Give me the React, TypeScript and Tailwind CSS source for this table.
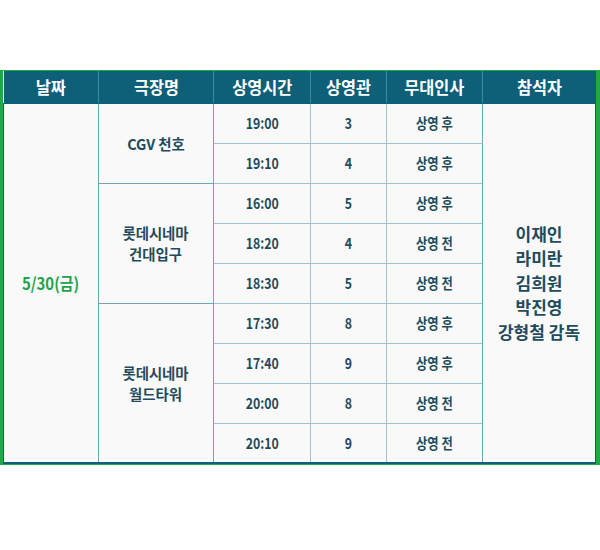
import React from 'react';

type Show = { time: string; hall: string; stage: string };
type Theater = { name: string[]; shows: Show[] };

const theaters: Theater[] = [
  {
    name: ['CGV 천호'],
    shows: [
      { time: '19:00', hall: '3', stage: '상영 후' },
      { time: '19:10', hall: '4', stage: '상영 후' },
    ],
  },
  {
    name: ['롯데시네마', '건대입구'],
    shows: [
      { time: '16:00', hall: '5', stage: '상영 후' },
      { time: '18:20', hall: '4', stage: '상영 전' },
      { time: '18:30', hall: '5', stage: '상영 전' },
    ],
  },
  {
    name: ['롯데시네마', '월드타워'],
    shows: [
      { time: '17:30', hall: '8', stage: '상영 후' },
      { time: '17:40', hall: '9', stage: '상영 후' },
      { time: '20:00', hall: '8', stage: '상영 전' },
      { time: '20:10', hall: '9', stage: '상영 전' },
    ],
  },
];

const attendees = ['이재인', '라미란', '김희원', '박진영', '강형철 감독'];
const headers = ['날짜', '극장명', '상영시간', '상영관', '무대인사', '참석자'];
const totalRows = theaters.reduce((n, t) => n + t.shows.length, 0);

const cell = 'border border-[#9ec4d1] text-center align-middle';

// the original uses a condensed face; squeeze the regular one
function Narrow({ children, className }: { children: React.ReactNode; className?: string }) {
  return <span className={`inline-block scale-x-[0.82] ${className ?? ''}`}>{children}</span>;
}

export default function App() {
  return (
    <div
      className="w-[600px] h-[550px] bg-white pt-[70px]"
      style={{ fontFamily: '"Noto Sans CJK KR", "Noto Sans", sans-serif' }}
    >
      <div className="bg-[#1fa947] pl-[3px] pr-[4px] pt-[1px] pb-[1px]">
        <table className="w-full table-fixed border-collapse border-b-2 border-[#0e5f78] bg-[#f9f9f9] text-[#1f4b5c]">
          <colgroup>
            <col className="w-[95px]" />
            <col className="w-[115px]" />
            <col className="w-[97px]" />
            <col className="w-[76px]" />
            <col className="w-[96px]" />
            <col />
          </colgroup>
          <thead>
            <tr className="h-[32px] bg-[#0e5f78]">
              {headers.map((h) => (
                <th
                  key={h}
                  className="border-x border-[#3d8aa5] first:border-l-0 last:border-r-0 border-b border-b-[#0e5f78] text-[17px] leading-[20px] font-bold text-white"
                >
                  <Narrow className="scale-x-[0.96]">{h}</Narrow>
                </th>
              ))}
            </tr>
          </thead>
          <tbody>
            {theaters.map((t, ti) =>
              t.shows.map((s, si) => (
                <tr key={`${ti}-${si}`} className="h-[40px]">
                  {ti === 0 && si === 0 && (
                    <td
                      rowSpan={totalRows}
                      className="border border-[#6fa6ba] border-l-[#0e5f78] text-center align-middle text-[17px] font-semibold text-[#1fa34d]"
                    >
                      <Narrow className="scale-x-[0.88]">5/30(금)</Narrow>
                    </td>
                  )}
                  {si === 0 && (
                    <td
                      rowSpan={t.shows.length}
                      className="border border-[#6fa6ba] text-center align-middle text-[15px] font-semibold leading-[21px]"
                    >
                      {t.name.map((n) => (
                        <div key={n}>
                          <Narrow className="scale-x-[0.96]">{n}</Narrow>
                        </div>
                      ))}
                    </td>
                  )}
                  <td className={`${cell} border-l-[#6fa6ba] text-[15px] font-bold`}>
                    <Narrow>{s.time}</Narrow>
                  </td>
                  <td className={`${cell} border-l-[#6fa6ba] text-[15px] font-bold`}>
                    <Narrow>{s.hall}</Narrow>
                  </td>
                  <td className={`${cell} border-x-[#6fa6ba] text-[15px] font-semibold`}>
                    <Narrow className="scale-x-[0.9]">{s.stage}</Narrow>
                  </td>
                  {ti === 0 && si === 0 && (
                    <td
                      rowSpan={totalRows}
                      className="border border-[#6fa6ba] border-r-[#0e5f78] text-center align-middle text-[17px] font-bold leading-[24.5px]"
                    >
                      {attendees.map((a) => (
                        <div key={a}>
                          <Narrow className="scale-x-[1]">{a}</Narrow>
                        </div>
                      ))}
                    </td>
                  )}
                </tr>
              ))
            )}
          </tbody>
        </table>
      </div>
    </div>
  );
}
